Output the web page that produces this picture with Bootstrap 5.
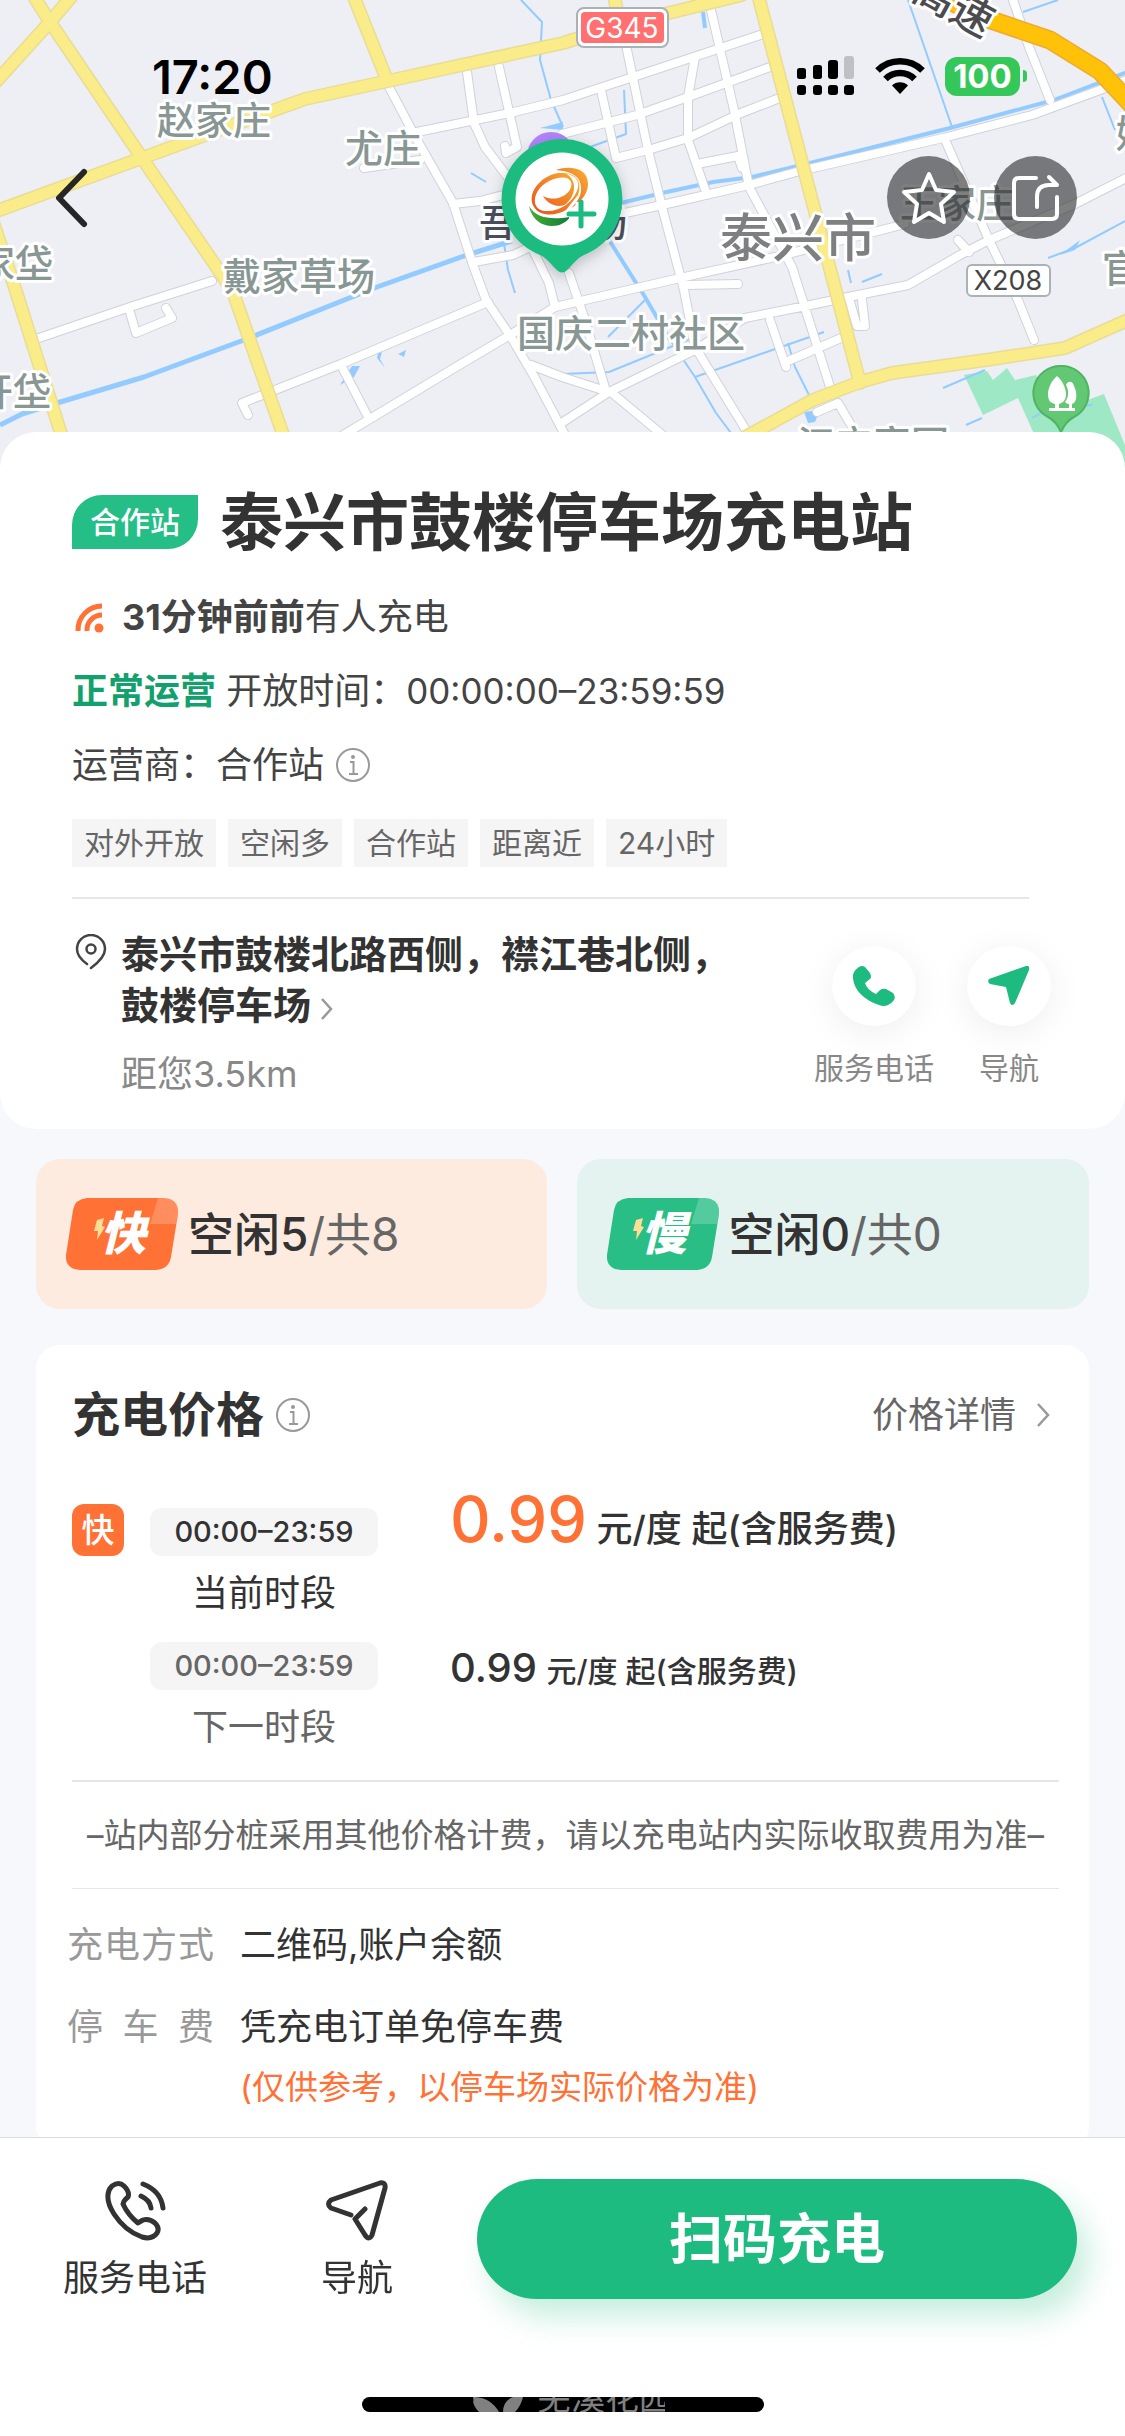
<!DOCTYPE html>
<html lang="zh-CN">
<head>
<meta charset="utf-8">
<meta name="viewport" content="width=device-width, initial-scale=1">
<title>泰兴市鼓楼停车场充电站</title>
<link href="https://cdn.jsdelivr.net/npm/bootstrap@5.3.0/dist/css/bootstrap.min.css" rel="stylesheet">
<style>
  :root { --brand:#1ebb80; --hot:#ff7135; --ink:#333; --soft:#666; --faint:#888; }
  body { font-family:Inter,"Noto Sans CJK SC",sans-serif; font-size:36px; line-height:50px; color:var(--ink); background:#f7f8fb; }
  button { color:inherit; }
  a { color:inherit; text-decoration:none; }
  .plain-btn { background:none; border:0; padding:0; line-height:inherit; }
  .w-medium { font-weight:500; }
  .hero { height:470px; background:#edeff4; }
  .hero-map { position:absolute; inset:0; width:100%; height:100%; }
  .hero-ui { position:relative; }
  .status-bar { padding:52px 98px 0 152px; height:100px; color:#000; }
  .clock { font-size:47px; font-weight:600; }
  .status-icons { gap:20px; }
  .battery { background:#34c759; color:#fff; width:75px; height:39px; line-height:39px; font-size:33px; font-weight:700; border-radius:12px; text-align:center; }
  .battery-nub { width:4px; height:12px; background:#34c759; border-radius:0 4px 4px 0; margin-left:3px; }
  .nav-line { padding:56px 48px 0 51px; }
  .round-btn { width:83px; height:83px; border-radius:50%; background:rgba(40,40,42,.6); }
  .nav-actions { gap:24px; }
  .sheet { position:relative; margin-top:-38px; background:#fff; border-radius:36px; padding:54px 74px 30px 72px; }
  .partner-tag { background:#24be86; color:#fff; font-size:30px; line-height:54px; padding:0 18px; border-radius:30px 0; }
  .station-name { font-size:63px; line-height:72px; font-weight:700; }
  .title-row { gap:22px; margin-bottom:34px; }
  .fact { color:#444; margin-bottom:24px; }
  .fact b { font-weight:700; }
  .fact .span-num { font-size:35px; }
  .state-ok { color:#12a06c; font-weight:700; }
  .chip-row { gap:12px; margin-top:29px; }
  .chip { background:#f5f5f5; color:var(--soft); font-size:30px; line-height:48px; padding:0 12px; }
  .rule { height:2px; background:#e7e7e7; }
  .sheet-rule { margin:30px 22px 30px 0; }
  .place-pin { margin:5px 13px 0 3px; }
  .place-text { font-size:38px; line-height:51px; font-weight:700; max-width:640px; }
  .distance { color:var(--faint); margin-top:18px; }
  .quick { font-size:30px; line-height:45px; color:var(--faint); gap:20px; margin-top:17px; }
  .quick-disc { width:84px; height:80px; border-radius:50%; background:#fff; box-shadow:0 6px 36px rgba(0,0,0,.07); }
  .quick-row { gap:33px; }
  .tiles { gap:30px; padding:30px 36px 36px; }
  .tile { height:150px; border-radius:24px; padding:0 30px; gap:10px; font-size:46px; color:var(--soft); }
  .tile strong { color:var(--ink); font-weight:500; }
  .tile-fast { background:#fdebdf; }
  .tile-slow { background:#e4f2f0; }
  .price-card { margin:0 36px; background:#fff; border-radius:24px; padding:34px 30px 38px 36px; }
  .price-title { font-size:48px; line-height:72px; font-weight:700; }
  .more-link { color:var(--soft); padding-right:9px; gap:20px; }
  .fast-mark { width:52px; height:52px; line-height:52px; border-radius:12px; background:var(--hot); color:#fff; font-size:33px; text-align:center; }
  .slot { gap:26px; }
  .slot-now { margin-top:32px; }
  .slot-next { margin-top:24px; margin-bottom:28px; color:var(--soft); }
  .mark-col { width:52px; }
  .time-col { width:228px; text-align:center; }
  .pill { background:#f5f5f5; border-radius:12px; font-size:29px; line-height:48px; font-weight:500; margin-bottom:12px; }
  .cost { margin-left:46px; color:var(--ink); font-weight:500; line-height:48px; }
  .cost-now { font-size:63px; line-height:72px; color:var(--hot); }
  .slot-next .cost { line-height:52px; }
  .cost-next { font-size:40px; }
  .unit-now { font-size:36px; line-height:1; }
  .unit-next { font-size:30px; line-height:1; }
  .notice { font-size:33px; color:var(--soft); padding:28px 0; text-align:center; }
  .rule-thin { height:1px; }
  .details { margin:31px 0 0 -5px; row-gap:32px; }
  .detail-name { width:147px; margin-right:26px; color:#999; text-align-last:justify; font-weight:400; }
  .caution { font-size:33px; color:var(--hot); margin-top:10px; }
  .dock { background:#fff; border-top:1px solid #dcdcdc; padding:41px 0 24px; }
  .dock-row { padding:0 48px 0 63px; }
  .dock-item { gap:12px; }
  .scan-btn { margin-left:84px; height:120px; border-radius:60px; background:var(--brand); color:#fff; font-size:54px; font-weight:700; box-shadow:12px 18px 30px rgba(30,187,128,.25); }
  .dock-nav { margin-left:114px; }
  .home-bar { width:402px; height:15px; border-radius:8px; background:#000; margin:94px auto 0; overflow:hidden; }
  .home-bar svg { display:block; margin:0 auto; }
  svg { flex:none; }
</style>
</head>
<body>
<header class="hero position-relative overflow-hidden">
  <svg class="hero-map" viewBox="0 0 1125 470" preserveAspectRatio="xMidYMin slice" aria-hidden="true">
    <defs>
      <linearGradient id="g1" x1="0" y1="1" x2="1" y2="0"><stop offset="0" stop-color="#e94e1b"/><stop offset="1" stop-color="#f9b233"/></linearGradient>
      <linearGradient id="g2" x1="0" y1="0" x2="1" y2="0"><stop offset="0" stop-color="#46ad35"/><stop offset="1" stop-color="#0f7c3a"/></linearGradient>
      <filter id="sh" x="-30%" y="-30%" width="160%" height="160%"><feDropShadow dx="0" dy="4" stdDeviation="7" flood-color="#000" flood-opacity=".22"/></filter>
      <g id="white-roads">
        <path d="M389 87L417 140L453 203L473 265L486 300L511 337L535 378L565 435M417 132L510 113L563 100L630 78L763 34M467 72L474 123L485 147L510 180M499 67L517 147L506 153L505 146M420 160L364 168M453 204L480 201L515 192M474 262L513 255L530 247M533 250L549 283L555 307M36 339L133 306L212 281M129 309L136 333L172 318L166 308M248 415L242 403L341 364L488 302M341 365L368 417M335 440L456 367L510 335L555 307L680 278L780 256L874 232L905 224M531 365L562 377L612 393L665 437"/>
        <path d="M626 45L648 150L662 207L684 290L695 347L749 435M711 10L734 110L749 187L792 267L813 333L831 390M601 90L616 158L648 150L688 138L741 113L777 99M562 134L637 115L688 97L770 67M695 57L688 97L688 140L707 195M702 163L738 156L742 168M625 213L662 205L749 185L800 171L943 138L1032 115L1130 79M1012 -3L1029 47L1050 100M946 142L989 240L1018 300L1034 340M848 297L908 285L960 255L989 240L1075 204L1130 176M958 240L969 252M745 318L806 306L848 297M560 424L609 392L695 350L745 318M569 273L584 317L605 388M686 285L738 284M770 320L786 367M788 361L848 335M850 302L857 326L865 326L862 300M817 412L838 403L860 440"/>
      </g>
      <g id="yellow-roads">
        <path d="M33 -5L50 22L142 158L224 278L234 295L248 335L285 440M72 -4L50 22L-6 84M-6 212L142 158L222 129L305 99L388 81L563 43L620 25L742 -5M353 -5L387 80M-6 225L14 285L63 440M614 -5L619 22M758 -5L804 170L860 383M740 440L813 400L860 382L892 373L993 359L1065 348L1130 319"/>
      </g>
    </defs>
    <rect width="1125" height="470" fill="#edeff4"/>
    <path d="M964 375L987 371L993 380L1007 368L1015 380L1036 375L1060 410L1104 394L1125 445V470H1050L1018 398L983 415Z" fill="#9fe8c6"/>
    <g fill="none" stroke="#93cbff" stroke-linejoin="round">
      <path stroke-width="5" d="M0 425L22 414L57 403L144 377L244 340L377 287L467 255L512 241"/>
      <path stroke-width="4" d="M621 203L662 193L713 182L752 177L810 163L950 128L1054 100L1127 72M703 12L705 28M609 240L645 297L670 340"/>
      <path stroke-width="2" d="M521 0L542 22L540 60L551 100L563 127M908 0L952 127M1023 12L1058 0M670 340L695 377L716 413L731 433M562 374L609 372L700 335M695 377L738 362L824 332M788 343L795 367L810 397M1048 258L1075 248L1127 220M1102 97L1115 130M624 90L626 134L590 147M608 337L645 300M848 270L851 283M862 282L882 274M504 243L508 270L515 293M943 388L985 370M966 425L982 418M471 173L486 182M1032 418L1050 408L1092 405"/>
    </g>
    <path d="M352 366L360 366L354 377L340 385ZM378 353L382 352L380 359L385 368L377 358ZM398 354L406 350L404 357ZM804 412L820 410L815 422L808 423ZM1060 255L1080 240L1075 250ZM540 128L563 122V130Z" fill="#93cbff"/>
    <g fill="none" stroke-linecap="round" stroke-linejoin="round">
      <use href="#white-roads" stroke="#cfd2da" stroke-width="10"/>
      <use href="#white-roads" stroke="#fff" stroke-width="8"/>
      <use href="#yellow-roads" stroke="#e9dc96" stroke-width="14"/>
      <use href="#yellow-roads" stroke="#faec88" stroke-width="11"/>
      <path d="M930 -8L991 20L1050 40L1100 71L1132 105" stroke="#eeaa2f" stroke-width="19"/>
      <path d="M930 -8L991 20L1050 40L1100 71L1132 105" stroke="#ffc208" stroke-width="16"/>
    </g>
    <g font-family="'Noto Sans CJK SC',sans-serif" font-size="38" font-weight="500" fill="#889793" stroke="#fff" stroke-width="6" stroke-linejoin="round" paint-order="stroke">
      <text x="157" y="134">赵家庄</text>
      <text x="345" y="162">尤庄</text>
      <text x="223" y="290">戴家草场</text>
      <text x="-23" y="277">家垈</text>
      <text x="-25" y="405">开垈</text>
      <text x="517" y="347">国庆二村社区</text>
      <text x="900" y="217">王家庄</text>
      <text x="1102" y="282">官</text>
      <text x="1116" y="147">姚</text>
      <text x="797" y="458">江宁家园</text>
      <text x="720" y="257" font-size="52" fill="#7d7f80">泰兴市</text>
      <text x="479" y="237" font-size="37" fill="#4a4e5a">吾悦广场</text>
      <text transform="translate(910 -2) rotate(29)" font-size="42" fill="#4c4c50">高速</text>
    </g>
    <g font-family="Inter,sans-serif" text-anchor="middle">
      <rect x="577" y="8" width="91" height="39" rx="7" fill="#fff" stroke="#aab2b8" stroke-width="2"/>
      <rect x="581" y="12" width="83" height="31" rx="4" fill="#ff7070"/>
      <text x="622" y="38" font-size="28" fill="#fff">G345</text>
      <rect x="967" y="265" width="83" height="31" rx="5" fill="#fff" stroke="#aab2b8" stroke-width="2"/>
      <text x="1008" y="290" font-size="27" fill="#444">X208</text>
    </g>
    <path d="M1061 366a27 27 0 0 1 13 51q-8 4-13 15q-5-11-13-15a27 27 0 0 1 13-51Z" fill="#62c873" stroke="#4fb463" stroke-width="2"/>
    <path d="M1057 376c5 4 9 12 9 18 0 6-3 9-7 10v4h10v-4c-2 0-3-1-4-2 4-5 4-12 1-17 2-5 7-4 8 1 3 6 4 16-2 18v4h3v3h-26v-3h6v-4c-5-1-7-4-7-10 0-6 4-14 9-18Z" fill="#fff"/>
    <circle cx="551" cy="156" r="24" fill="#b184fb"/>
    <g filter="url(#sh)"><path d="M562 139a60 60 0 0 1 22 116c-8 4-11 10-18 16q-4 3-8 0c-7-6-10-12-18-16a60 60 0 0 1 22-116Z" fill="#1ebb80"/></g>
    <circle cx="562" cy="199" r="46.500" fill="#fff"/>
    <path d="M556 170C570 165 588 168 588 184C588 194 580 203 571 208C580 200 584 190 579 180C575 173 566 171 556 170Z" fill="url(#g1)"/>
    <path d="M543 196C558 204 574 192 571 182C568 174 550 177 540 188C531 199 534 212 548 211C560 211 572 203 577 191C582 179 572 172 558 173C540 176 526 194 534 207C540 217 556 216 566 210L578 195C582 184 578 174 565 173C577 179 577 194 566 204C560 208 549 206 543 196Z" fill="url(#g1)" fill-rule="evenodd"/>
    <path d="M529 206C536 218 550 220 570 217C562 230 534 231 529 206Z" fill="url(#g2)"/>
    <path d="M581 202V226M569 214H594" stroke="#fff" stroke-width="11"/>
    <path d="M581 202V226M569 214H594" stroke="#1ebb80" stroke-width="5" stroke-linecap="round"/>
  </svg>
  <div class="hero-ui">
    <div class="status-bar d-flex justify-content-between align-items-start">
      <span class="clock">17:20</span>
      <div class="status-icons d-flex align-items-center pt-1">
        <svg width="58" height="40" viewBox="0 0 58 40"><g fill="#000"><rect y="12" width="9" height="11" rx="2.500"/><rect x="16" y="9" width="9" height="14" rx="2.500"/><rect x="31" y="4" width="10" height="19" rx="3"/><rect x="47" width="10" height="23" rx="3" fill="#bfc0c4"/><rect y="29" width="9" height="10" rx="3"/><rect x="16" y="29" width="9" height="10" rx="3"/><rect x="31" y="29" width="10" height="10" rx="3"/><rect x="47" y="29" width="10" height="10" rx="3"/></g></svg>
        <svg width="50" height="38" viewBox="0 0 50 38"><g fill="none" stroke="#000" stroke-width="6.500"><path d="M2.500 13.500a32 32 0 0 1 45 0"/><path d="M10.500 22a20.500 20.500 0 0 1 29 0"/></g><path d="M25 37l-8-8.500a11.500 11.500 0 0 1 16 0Z"/></svg>
        <div class="d-flex align-items-center"><span class="battery">100</span><span class="battery-nub"></span></div>
      </div>
    </div>
    <div class="nav-line d-flex justify-content-between align-items-center">
      <button class="plain-btn" type="button" aria-label="返回"><svg width="40" height="64" viewBox="0 0 40 64" fill="none" stroke="#262626" stroke-width="6" stroke-linecap="round" stroke-linejoin="round"><path d="M33 6L8 32L33 58"/></svg></button>
      <div class="nav-actions d-flex">
        <button class="plain-btn round-btn d-flex align-items-center justify-content-center" type="button" aria-label="收藏"><svg width="56" height="56" viewBox="0 0 56 56" fill="none" stroke="#fff" stroke-width="4" stroke-linejoin="round"><path d="M28 4L35 20L53 22L40 34L43 52L28 43L13 52L16 34L3 22L21 20Z"/></svg></button>
        <button class="plain-btn round-btn d-flex align-items-center justify-content-center" type="button" aria-label="分享"><svg width="50" height="50" viewBox="0 0 50 50" fill="none" stroke="#fff" stroke-width="4" stroke-linecap="round" stroke-linejoin="round"><path d="M25 5H8Q3 5 3 10V41Q3 46 8 46H41Q46 46 46 41V24"/><path d="M26 34V24Q26 12 38 12H46L38 4"/></svg></button>
      </div>
    </div>
  </div>
</header>

<main>
  <section class="sheet">
    <div class="title-row d-flex align-items-center">
      <span class="partner-tag w-medium">合作站</span>
      <h1 class="station-name mb-0">泰兴市鼓楼停车场充电站</h1>
    </div>
    <p class="fact d-flex align-items-center"><svg width="34" height="34" viewBox="0 0 34 34" class="me-3" fill="none" stroke="#ff7135" stroke-width="5"><path d="M6 31A24 24 0 0 1 30 6M15 31A15 15 0 0 1 30 15"/><circle cx="27" cy="28" r="4.500" fill="#ff7135" stroke="none"/></svg><span><b class="w-medium">31分钟前前</b>有人充电</span></p>
    <p class="fact"><span class="state-ok">正常运营</span> 开放时间：<span class="span-num">00:00:00–23:59:59</span></p>
    <p class="fact d-flex align-items-center mb-0">运营商：合作站<svg width="38" height="36" viewBox="0 0 38 36" class="ms-2" fill="none" stroke="#999" stroke-width="2"><circle cx="21" cy="18" r="16"/><path d="M18 15h3.500v12M17 27h9"/><circle cx="21" cy="10" r="2" fill="#999" stroke="none"/></svg></p>
    <div class="chip-row d-flex flex-wrap"><span class="chip">对外开放</span><span class="chip">空闲多</span><span class="chip">合作站</span><span class="chip">距离近</span><span class="chip">24小时</span></div>
    <div class="rule sheet-rule"></div>
    <div class="d-flex justify-content-between align-items-start">
      <div class="d-flex align-items-start">
        <svg class="place-pin" width="33" height="36" viewBox="0 0 33 36" fill="none" stroke="#444" stroke-width="2.500" stroke-linecap="round"><path d="M12 30C5 25 2 20 2 15a14 14 0 0 1 28 0c0 7-6 13-14 19"/><circle cx="16" cy="15" r="4.500"/></svg>
        <div>
          <a href="#" class="place-text d-block">泰兴市鼓楼北路西侧，襟江巷北侧，鼓楼停车场 <svg width="14" height="24" viewBox="0 0 14 24" fill="none" stroke="#999" stroke-width="2.500"><path d="M2 2L11 12L2 22"/></svg></a>
          <div class="distance">距您3.5km</div>
        </div>
      </div>
      <div class="quick-row d-flex">
        <a href="#" class="quick d-flex flex-column align-items-center"><span class="quick-disc d-flex align-items-center justify-content-center"><svg width="42" height="40" viewBox="0 0 42 40"><path d="M0 9Q1 4 6 1Q9-1 12 1L17 7Q19 11 17 13L12 17Q14 24 23 28L27 24Q30 22 33 23L40 27Q43 31 41 34Q39 37 35 39Q31 41 26 39C10 34-1 22 0 9Z" fill="#1ebb80"/></svg></span><span>服务电话</span></a>
        <a href="#" class="quick d-flex flex-column align-items-center"><span class="quick-disc d-flex align-items-center justify-content-center"><svg width="42" height="40" viewBox="0 0 42 40"><path d="M1 13L38 0Q42-1 41 4L27 37Q24 41 22 37L18 21L2 18Q-1 16 1 13Z" fill="#1ebb80"/></svg></span><span>导航</span></a>
      </div>
    </div>
  </section>

  <section class="tiles d-flex">
    <div class="tile tile-fast d-flex align-items-center flex-fill">
      <svg width="112" height="72" viewBox="0 0 112 72"><path d="M21 0H98Q113 1 112 16L105 59Q103 71 90 72H14Q-1 71 0 57L7 12Q9 1 21 0Z" fill="#ff7135"/><path d="M92 0H98Q113 1 112 16L110 26H84Z" fill="#fff" opacity=".2"/><path d="M31 22L38 20L36 28L39 29L31 42L32 33H28Z" fill="#fedd94"/><text x="34" y="52" font-family="'Noto Sans CJK SC',sans-serif" font-size="46" font-weight="900" font-style="italic" fill="#fff">快</text></svg>
      <span><strong>空闲5</strong>/共8</span>
    </div>
    <div class="tile tile-slow d-flex align-items-center flex-fill">
      <svg width="112" height="72" viewBox="0 0 112 72"><path d="M21 0H98Q113 1 112 16L105 59Q103 71 90 72H14Q-1 71 0 57L7 12Q9 1 21 0Z" fill="#28be86"/><path d="M92 0H98Q113 1 112 16L110 26H84Z" fill="#fff" opacity=".2"/><path d="M29 22L36 20L34 28L37 29L29 42L30 33H26Z" fill="#fedd94"/><text x="34" y="52" font-family="'Noto Sans CJK SC',sans-serif" font-size="46" font-weight="900" font-style="italic" fill="#fff">慢</text></svg>
      <span><strong>空闲0</strong>/共0</span>
    </div>
  </section>

  <section class="price-card">
    <div class="d-flex justify-content-between align-items-center">
      <h2 class="price-title mb-0 d-flex align-items-center">充电价格<svg width="38" height="36" viewBox="0 0 38 36" class="ms-2" fill="none" stroke="#999" stroke-width="2"><circle cx="21" cy="18" r="16"/><path d="M18 15h3.500v12M17 27h9"/><circle cx="21" cy="10" r="2" fill="#999" stroke="none"/></svg></h2>
      <a href="#" class="more-link d-flex align-items-center">价格详情<svg width="14" height="26" viewBox="0 0 14 26" fill="none" stroke="#999" stroke-width="2.500"><path d="M2 2L12 13L2 24"/></svg></a>
    </div>
    <div class="slot slot-now d-flex align-items-baseline">
      <span class="fast-mark w-medium">快</span>
      <div class="time-col"><div class="pill">00:00–23:59</div>当前时段</div>
      <div class="cost"><span class="cost-now">0.99</span> <span class="unit-now">元/度 起(含服务费)</span></div>
    </div>
    <div class="slot slot-next d-flex align-items-start">
      <span class="mark-col"></span>
      <div class="time-col"><div class="pill">00:00–23:59</div>下一时段</div>
      <div class="cost"><span class="cost-next">0.99</span> <span class="unit-next">元/度 起(含服务费)</span></div>
    </div>
    <div class="rule"></div>
    <div class="notice">–站内部分桩采用其他价格计费，请以充电站内实际收取费用为准–</div>
    <div class="rule rule-thin"></div>
    <dl class="details d-flex flex-column mb-0">
      <div class="d-flex"><dt class="detail-name">充电方式</dt><dd class="mb-0">二维码,账户余额</dd></div>
      <div class="d-flex"><dt class="detail-name">停车费</dt><dd class="mb-0">凭充电订单免停车费<div class="caution">(仅供参考，以停车场实际价格为准)</div></dd></div>
    </dl>
  </section>
</main>

<footer class="dock fixed-bottom">
  <div class="dock-row d-flex align-items-start">
    <a href="#" class="dock-item d-flex flex-column align-items-center"><svg width="62" height="62" viewBox="0 0 62 62" fill="none" stroke="#333" stroke-width="5" stroke-linecap="round" stroke-linejoin="round"><path d="M4 16Q4 11 8 7Q15 2 20 7Q26 13 24 18Q20 21 19 25Q24 36 34 44Q37 42 39 41Q45 39 51 44Q56 49 53 54Q48 61 38 58Q21 52 10 35Q3 24 4 16Z"/><path d="M39 5Q57 12 59 29M37 17Q46 21 47 29"/></svg><span>服务电话</span></a>
    <a href="#" class="dock-item dock-nav d-flex flex-column align-items-center"><svg width="62" height="62" viewBox="0 0 62 62" fill="none" stroke="#333" stroke-width="5" stroke-linecap="round" stroke-linejoin="round"><path d="M25 36L5 29Q0 25 5 21L54 4Q60 3 59 9L46 56Q43 62 39 56L29 40L39 30"/></svg><span>导航</span></a>
    <button type="button" class="btn scan-btn flex-grow-1">扫码充电</button>
  </div>
  <div class="home-bar"><svg width="204" height="15" viewBox="0 0 204 15" aria-hidden="true"><g fill="#808080"><path d="M14 0Q30 1 38 15H22Q12 8 12 0ZM62 0Q60 9 54 15H42Q42 4 52 0ZM12 3Q16 11 24 15H18Q12 9 12 3Z"/><text x="76" y="13" font-family="'Noto Sans CJK SC',sans-serif" font-size="34">芜溪花园</text></g></svg></div>
</footer>
<script src="https://cdn.jsdelivr.net/npm/bootstrap@5.3.0/dist/js/bootstrap.bundle.min.js"></script>
</body>
</html>
